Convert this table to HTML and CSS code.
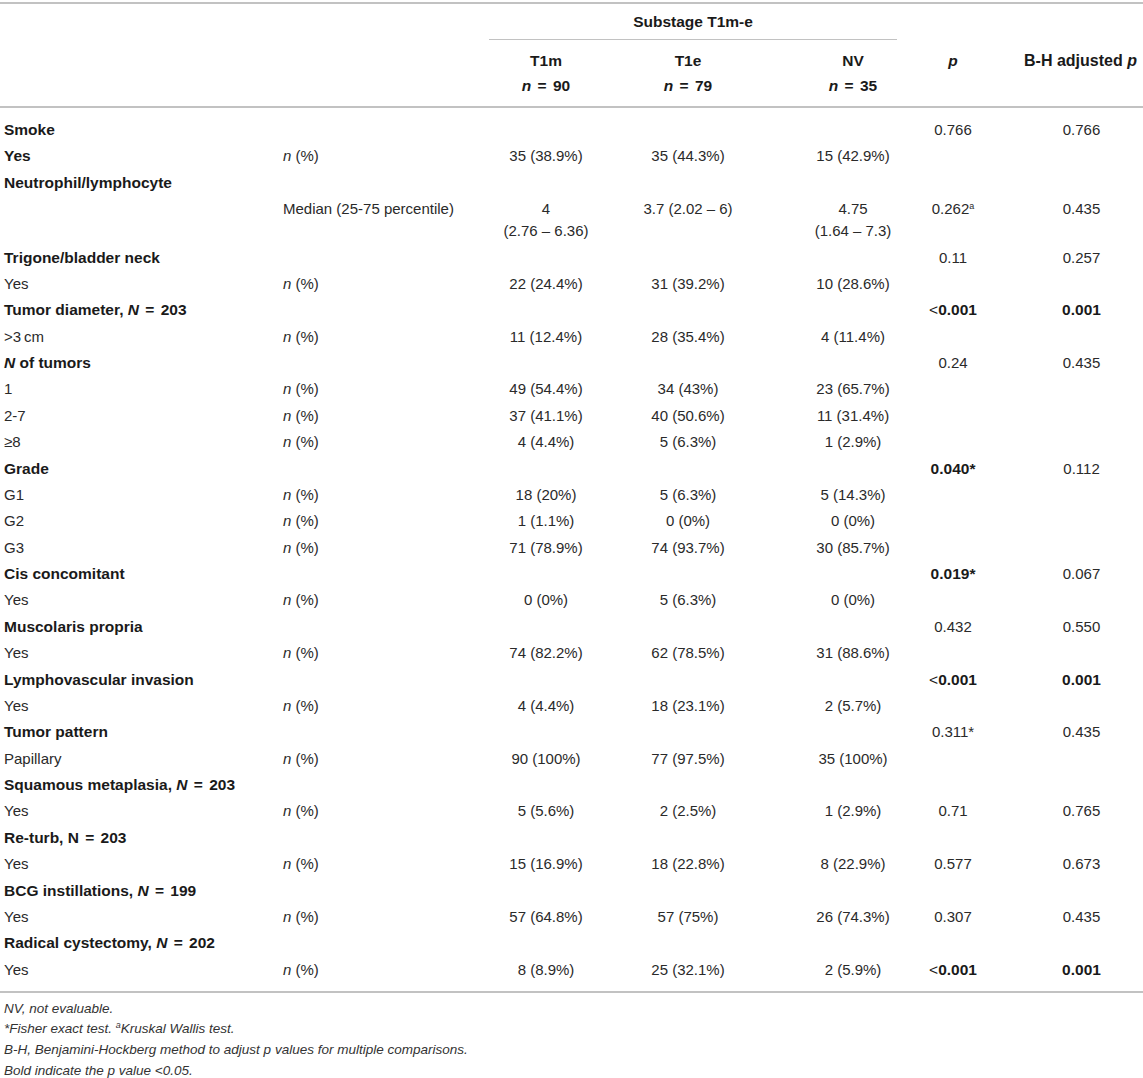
FILE: index.html
```html
<!DOCTYPE html>
<html lang="en">
<head>
<meta charset="utf-8">
<title>Substage T1m-e</title>
<link rel="stylesheet" href="styles.css">
</head>
<body>
<div class="wrap">
<table class="data">
  <colgroup>
    <col class="c1"><col class="c2"><col class="c3"><col class="c4"><col class="c5"><col class="c6"><col class="c7">
  </colgroup>
  <thead>
    <tr class="h1">
      <th></th><th></th>
      <th colspan="3" class="span"><div class="span-label">Substage T1m-e</div></th>
      <th></th><th></th>
    </tr>
    <tr class="h2">
      <th></th><th></th>
      <th class="m3">T1m<br><i>n</i> <span class="eq">=</span> 90</th>
      <th class="m4">T1e<br><i>n</i> <span class="eq">=</span> 79</th>
      <th class="m5">NV<br><i>n</i> <span class="eq">=</span> 35</th>
      <th class="m6"><i>p</i></th>
      <th class="m7">B-H adjusted <i>p</i></th>
    </tr>
  </thead>
  <tbody>
    <tr class="first"><td class="b">Smoke</td><td></td><td></td><td></td><td></td><td class="m6">0.766</td><td class="m7">0.766</td></tr>
    <tr><td class="b">Yes</td><td><i>n</i> (%)</td><td class="m3">35 (38.9%)</td><td class="m4">35 (44.3%)</td><td class="m5">15 (42.9%)</td><td></td><td></td></tr>
    <tr><td class="b">Neutrophil/lymphocyte</td><td></td><td></td><td></td><td></td><td></td><td></td></tr>
    <tr><td></td><td>Median (25-75 percentile)</td><td class="m3">4<br>(2.76 – 6.36)</td><td class="m4">3.7 (2.02 – 6)</td><td class="m5">4.75<br>(1.64 – 7.3)</td><td class="m6">0.262<sup>a</sup></td><td class="m7">0.435</td></tr>
    <tr><td class="b">Trigone/bladder neck</td><td></td><td></td><td></td><td></td><td class="m6">0.11</td><td class="m7">0.257</td></tr>
    <tr><td>Yes</td><td><i>n</i> (%)</td><td class="m3">22 (24.4%)</td><td class="m4">31 (39.2%)</td><td class="m5">10 (28.6%)</td><td></td><td></td></tr>
    <tr><td class="b">Tumor diameter, <i>N</i> <span class="eq">=</span> 203</td><td></td><td></td><td></td><td></td><td class="m6 b"><span class="lt">&lt;</span>0.001</td><td class="m7 b">0.001</td></tr>
    <tr><td>&gt;3&#8201;cm</td><td><i>n</i> (%)</td><td class="m3">11 (12.4%)</td><td class="m4">28 (35.4%)</td><td class="m5">4 (11.4%)</td><td></td><td></td></tr>
    <tr><td class="b"><i>N</i> of tumors</td><td></td><td></td><td></td><td></td><td class="m6">0.24</td><td class="m7">0.435</td></tr>
    <tr><td>1</td><td><i>n</i> (%)</td><td class="m3">49 (54.4%)</td><td class="m4">34 (43%)</td><td class="m5">23 (65.7%)</td><td></td><td></td></tr>
    <tr><td>2-7</td><td><i>n</i> (%)</td><td class="m3">37 (41.1%)</td><td class="m4">40 (50.6%)</td><td class="m5">11 (31.4%)</td><td></td><td></td></tr>
    <tr><td>≥8</td><td><i>n</i> (%)</td><td class="m3">4 (4.4%)</td><td class="m4">5 (6.3%)</td><td class="m5">1 (2.9%)</td><td></td><td></td></tr>
    <tr><td class="b">Grade</td><td></td><td></td><td></td><td></td><td class="m6 b">0.040*</td><td class="m7">0.112</td></tr>
    <tr><td>G1</td><td><i>n</i> (%)</td><td class="m3">18 (20%)</td><td class="m4">5 (6.3%)</td><td class="m5">5 (14.3%)</td><td></td><td></td></tr>
    <tr><td>G2</td><td><i>n</i> (%)</td><td class="m3">1 (1.1%)</td><td class="m4">0 (0%)</td><td class="m5">0 (0%)</td><td></td><td></td></tr>
    <tr><td>G3</td><td><i>n</i> (%)</td><td class="m3">71 (78.9%)</td><td class="m4">74 (93.7%)</td><td class="m5">30 (85.7%)</td><td></td><td></td></tr>
    <tr><td class="b">Cis concomitant</td><td></td><td></td><td></td><td></td><td class="m6 b">0.019*</td><td class="m7">0.067</td></tr>
    <tr><td>Yes</td><td><i>n</i> (%)</td><td class="m3">0 (0%)</td><td class="m4">5 (6.3%)</td><td class="m5">0 (0%)</td><td></td><td></td></tr>
    <tr><td class="b">Muscolaris propria</td><td></td><td></td><td></td><td></td><td class="m6">0.432</td><td class="m7">0.550</td></tr>
    <tr><td>Yes</td><td><i>n</i> (%)</td><td class="m3">74 (82.2%)</td><td class="m4">62 (78.5%)</td><td class="m5">31 (88.6%)</td><td></td><td></td></tr>
    <tr><td class="b">Lymphovascular invasion</td><td></td><td></td><td></td><td></td><td class="m6 b"><span class="lt">&lt;</span>0.001</td><td class="m7 b">0.001</td></tr>
    <tr><td>Yes</td><td><i>n</i> (%)</td><td class="m3">4 (4.4%)</td><td class="m4">18 (23.1%)</td><td class="m5">2 (5.7%)</td><td></td><td></td></tr>
    <tr><td class="b">Tumor pattern</td><td></td><td></td><td></td><td></td><td class="m6">0.311*</td><td class="m7">0.435</td></tr>
    <tr><td>Papillary</td><td><i>n</i> (%)</td><td class="m3">90 (100%)</td><td class="m4">77 (97.5%)</td><td class="m5">35 (100%)</td><td></td><td></td></tr>
    <tr><td class="b">Squamous metaplasia, <i>N</i> <span class="eq">=</span> 203</td><td></td><td></td><td></td><td></td><td></td><td></td></tr>
    <tr><td>Yes</td><td><i>n</i> (%)</td><td class="m3">5 (5.6%)</td><td class="m4">2 (2.5%)</td><td class="m5">1 (2.9%)</td><td class="m6">0.71</td><td class="m7">0.765</td></tr>
    <tr><td class="b">Re-turb, N <span class="eq">=</span> 203</td><td></td><td></td><td></td><td></td><td></td><td></td></tr>
    <tr><td>Yes</td><td><i>n</i> (%)</td><td class="m3">15 (16.9%)</td><td class="m4">18 (22.8%)</td><td class="m5">8 (22.9%)</td><td class="m6">0.577</td><td class="m7">0.673</td></tr>
    <tr><td class="b">BCG instillations, <i>N</i> <span class="eq">=</span> 199</td><td></td><td></td><td></td><td></td><td></td><td></td></tr>
    <tr><td>Yes</td><td><i>n</i> (%)</td><td class="m3">57 (64.8%)</td><td class="m4">57 (75%)</td><td class="m5">26 (74.3%)</td><td class="m6">0.307</td><td class="m7">0.435</td></tr>
    <tr><td class="b">Radical cystectomy, <i>N</i> <span class="eq">=</span> 202</td><td></td><td></td><td></td><td></td><td></td><td></td></tr>
    <tr class="last"><td>Yes</td><td><i>n</i> (%)</td><td class="m3">8 (8.9%)</td><td class="m4">25 (32.1%)</td><td class="m5">2 (5.9%)</td><td class="m6 b"><span class="lt">&lt;</span>0.001</td><td class="m7 b">0.001</td></tr>
  </tbody>
</table>
<div class="notes">
  <p>NV, not evaluable.</p>
  <p>*Fisher exact test. <sup>a</sup>Kruskal Wallis test.</p>
  <p>B-H, Benjamini-Hockberg method to adjust p values for multiple comparisons.</p>
  <p>Bold indicate the p value &lt;0.05.</p>
</div>
</div>
</body>
</html>
```

FILE: styles.css
```css
html, body {
  margin: 0;
  padding: 0;
  background: #ffffff;
}

body {
  font-family: "Liberation Sans", Arial, Helvetica, sans-serif;
  font-size: 15px;
  color: #2a2a2a;
}

.wrap {
  padding-top: 2px;
  width: 1143px;
}

.data {
  width: 1143px;
  table-layout: fixed;
  border-collapse: separate;
  border-spacing: 0;
  border-top: 2px solid #c2c2c2;
  border-bottom: 2px solid #c2c2c2;
}

.c1 { width: 279px; }
.c2 { width: 201px; }
.c3 { width: 132px; }
.c4 { width: 152px; }
.c5 { width: 136px; }
.c6 { width: 110px; }
.c7 { width: 133px; }

th, td {
  padding: 2.2px 4px;
  line-height: 22px;
  text-align: left;
  vertical-align: top;
  white-space: nowrap;
  font-size: 15px;
}

th {
  font-weight: bold;
  font-size: 15.5px;
  color: #1a1a1a;
}

.h1 th {
  padding: 7px 0 0 0;
}

.h1 th.span {
  padding: 7px 3px 0 9px;
  text-align: center;
}

.span-label {
  padding-bottom: 6px;
  border-bottom: 1px solid #c2c2c2;
  text-align: center;
}

.h2 th {
  padding-top: 7.5px;
  padding-bottom: 8.5px;
  line-height: 25px;
  border-bottom: 2px solid #c2c2c2;
}

.m3, .m4 { text-align: center; }
.m5 { text-align: center; padding-left: 42px; padding-right: 0; }
.m6 { text-align: center; padding-left: 0; padding-right: 4px; }
.m7 { text-align: center; padding-left: 10px; padding-right: 0; }

.h2 th.m5 { padding-left: 42px; padding-right: 0; }
.h2 th.m6 { padding-left: 0; padding-right: 4px; }
.h2 th.m7 { padding-left: 8px; padding-right: 0; font-size: 16px; }

.b {
  font-weight: bold;
  font-size: 15.5px;
  color: #1a1a1a;
}

.eq {
  margin: 0 2px;
}

.lt {
  font-weight: normal;
}

tr.first td {
  padding-top: 11px;
}

tr.last td {
  padding-bottom: 10px;
}

sup {
  font-size: 9px;
  line-height: 0;
  vertical-align: 5px;
}

.notes {
  margin-top: 6px;
  padding-left: 4px;
  font-style: italic;
  font-size: 13.5px;
  color: #333333;
}

.notes p {
  margin: 0;
  line-height: 20.7px;
}
```
